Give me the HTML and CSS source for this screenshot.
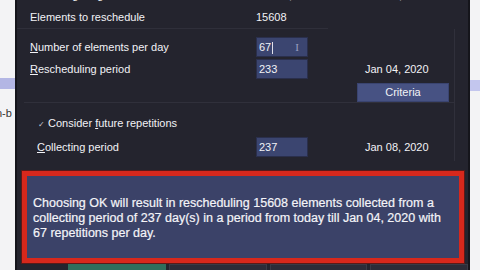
FILE: index.html
```html
<!DOCTYPE html>
<html lang="en">
<head>
  <meta charset="UTF-8">
  <title>Reschedule elements</title>
  <link rel="stylesheet" href="styles.css">
</head>
<body>
  <div class="page">
    <div class="side side-left">
      <div class="band"></div>
      <div class="side-text">n-b</div>
    </div>

    <div class="dialog">
      <div class="row row-cut">
        <span class="label">Collecting range start</span>
        <span class="value">Jan 01, 2019</span>
        <span class="date">Jan 08, 2020</span>
      </div>
      <div class="row row-top">
        <span class="label">Elements to reschedule</span>
        <span class="value">15608</span>
      </div>

      <div class="section">
        <div class="row">
          <span class="label"><u>N</u>umber of elements per day</span>
          <span class="field">67<i class="caret"></i><i class="ibeam">I</i></span>
        </div>
        <div class="row">
          <span class="label"><u>R</u>escheduling period</span>
          <span class="field">233</span>
          <span class="date">Jan 04, 2020</span>
        </div>
        <div class="row row-btn">
          <button class="criteria">Criteria</button>
        </div>

        <div class="group">
          <div class="check"><span class="tick">&#10003;</span> Consider <u>f</u>uture repetitions</div>
          <div class="row">
            <span class="label"><u>C</u>ollecting period</span>
            <span class="field">237</span>
            <span class="date">Jan 08, 2020</span>
          </div>
        </div>
      </div>

      <div class="notice">
        <p>Choosing OK will result in rescheduling 15608 elements collected from a collecting period of 237 day(s) in a period from today till Jan 04, 2020 with 67 repetitions per day.</p>
      </div>

      <div class="buttons">
        <span class="btn btn-ok"></span>
        <span class="btn"></span>
        <span class="btn"></span>
        <span class="btn"></span>
      </div>
    </div>

    <div class="side side-right">
      <div class="band"></div>
    </div>
  </div>
</body>
</html>
```

FILE: styles.css
```css
body {
  margin: 0;
  background: #f3f3f5;
  font-family: 'Liberation Sans', Arial, sans-serif;
  overflow: hidden;
}

.page {
  display: flex;
  width: 480px;
  height: 270px;
}

.side {
  background: #f3f3f5;
}

.side-left {
  width: 15px;
}

.side-right {
  width: 10px;
}

.side-left .band {
  margin-top: 78px;
  height: 11px;
  background: #b3b6e4;
}

.side-right .band {
  margin-top: 80px;
  height: 11px;
  background: #c3c6ee;
}

.side-text {
  margin-top: 18px;
  margin-left: -4px;
  font-size: 11px;
  color: #333;
}

.dialog {
  flex: 1;
  background: #24242e;
  border-left: 2px solid #15151b;
  border-right: 2px solid #15151b;
  color: #f2f2f6;
  font-size: 11px;
  overflow: hidden;
}

.row {
  display: flex;
  align-items: center;
  height: 22px;
  padding-left: 13px;
}

.row-cut {
  margin-top: -16px;
}

.row-top {
  border-bottom: 1px solid #2f2f3a;
  margin-right: 140px;
}

.label {
  width: 226px;
  flex-shrink: 0;
}

.value {
  width: 110px;
  flex-shrink: 0;
}

.section {
  padding-top: 7px;
  margin-right: 13px;
  border-right: 1px solid #30303b;
}

.field {
  width: 48px;
  height: 18px;
  line-height: 18px;
  padding-left: 2px;
  background: #3b4570;
  border: 1px solid #2a2f4c;
  position: relative;
  margin-right: 57px;
}

.caret {
  display: inline-block;
  width: 1px;
  height: 12px;
  background: #e0e0ea;
  vertical-align: middle;
  margin-left: 1px;
}

.ibeam {
  position: absolute;
  right: 8px;
  top: 0;
  font-style: normal;
  font-family: 'Liberation Serif', serif;
  color: #9aa0c0;
  font-size: 11px;
}

.row-btn {
  justify-content: flex-end;
  height: 20px;
  margin-top: 2px;
}

.criteria {
  width: 92px;
  height: 19px;
  background: #475283;
  border: 1px solid #3a4470;
  color: #f2f2f6;
  font-family: 'Liberation Sans', Arial, sans-serif;
  font-size: 11px;
  margin-right: 5px;
}

.group {
  margin: 0 0 0 7px;
  border-top: 1px solid #30303b;
  padding-top: 10px;
  padding-bottom: 3px;
}

.group .row {
  padding-left: 0;
  margin-left: 13px;
}

.group .label {
  width: 219px;
}

.check {
  height: 20px;
  line-height: 20px;
  margin-bottom: 3px;
  padding-left: 14px;
}

.tick {
  font-size: 8px;
  color: #c8c8d4;
}

.notice {
  margin: 10px 4px 0 5px;
  height: 82px;
  border: 5px solid #d7281c;
  outline: 1px solid #5a1a18;
  background: #3b4268;
  display: flex;
  align-items: center;
}

.notice p {
  margin: 0 6px 0 6px;
  padding-top: 3px;
  font-size: 12.5px;
  line-height: 15px;
  color: #f4f4f8;
  -webkit-text-stroke: 0.2px #f4f4f8;
}

.buttons {
  display: flex;
  gap: 3px;
  margin: 1px 0 0 51px;
}

.btn {
  width: 96px;
  height: 8px;
  background: #2c2c38;
  border: 1px solid #3a3a46;
}

.btn-ok {
  background: #2f6e5c;
  border-color: #2f6e5c;
}
```
